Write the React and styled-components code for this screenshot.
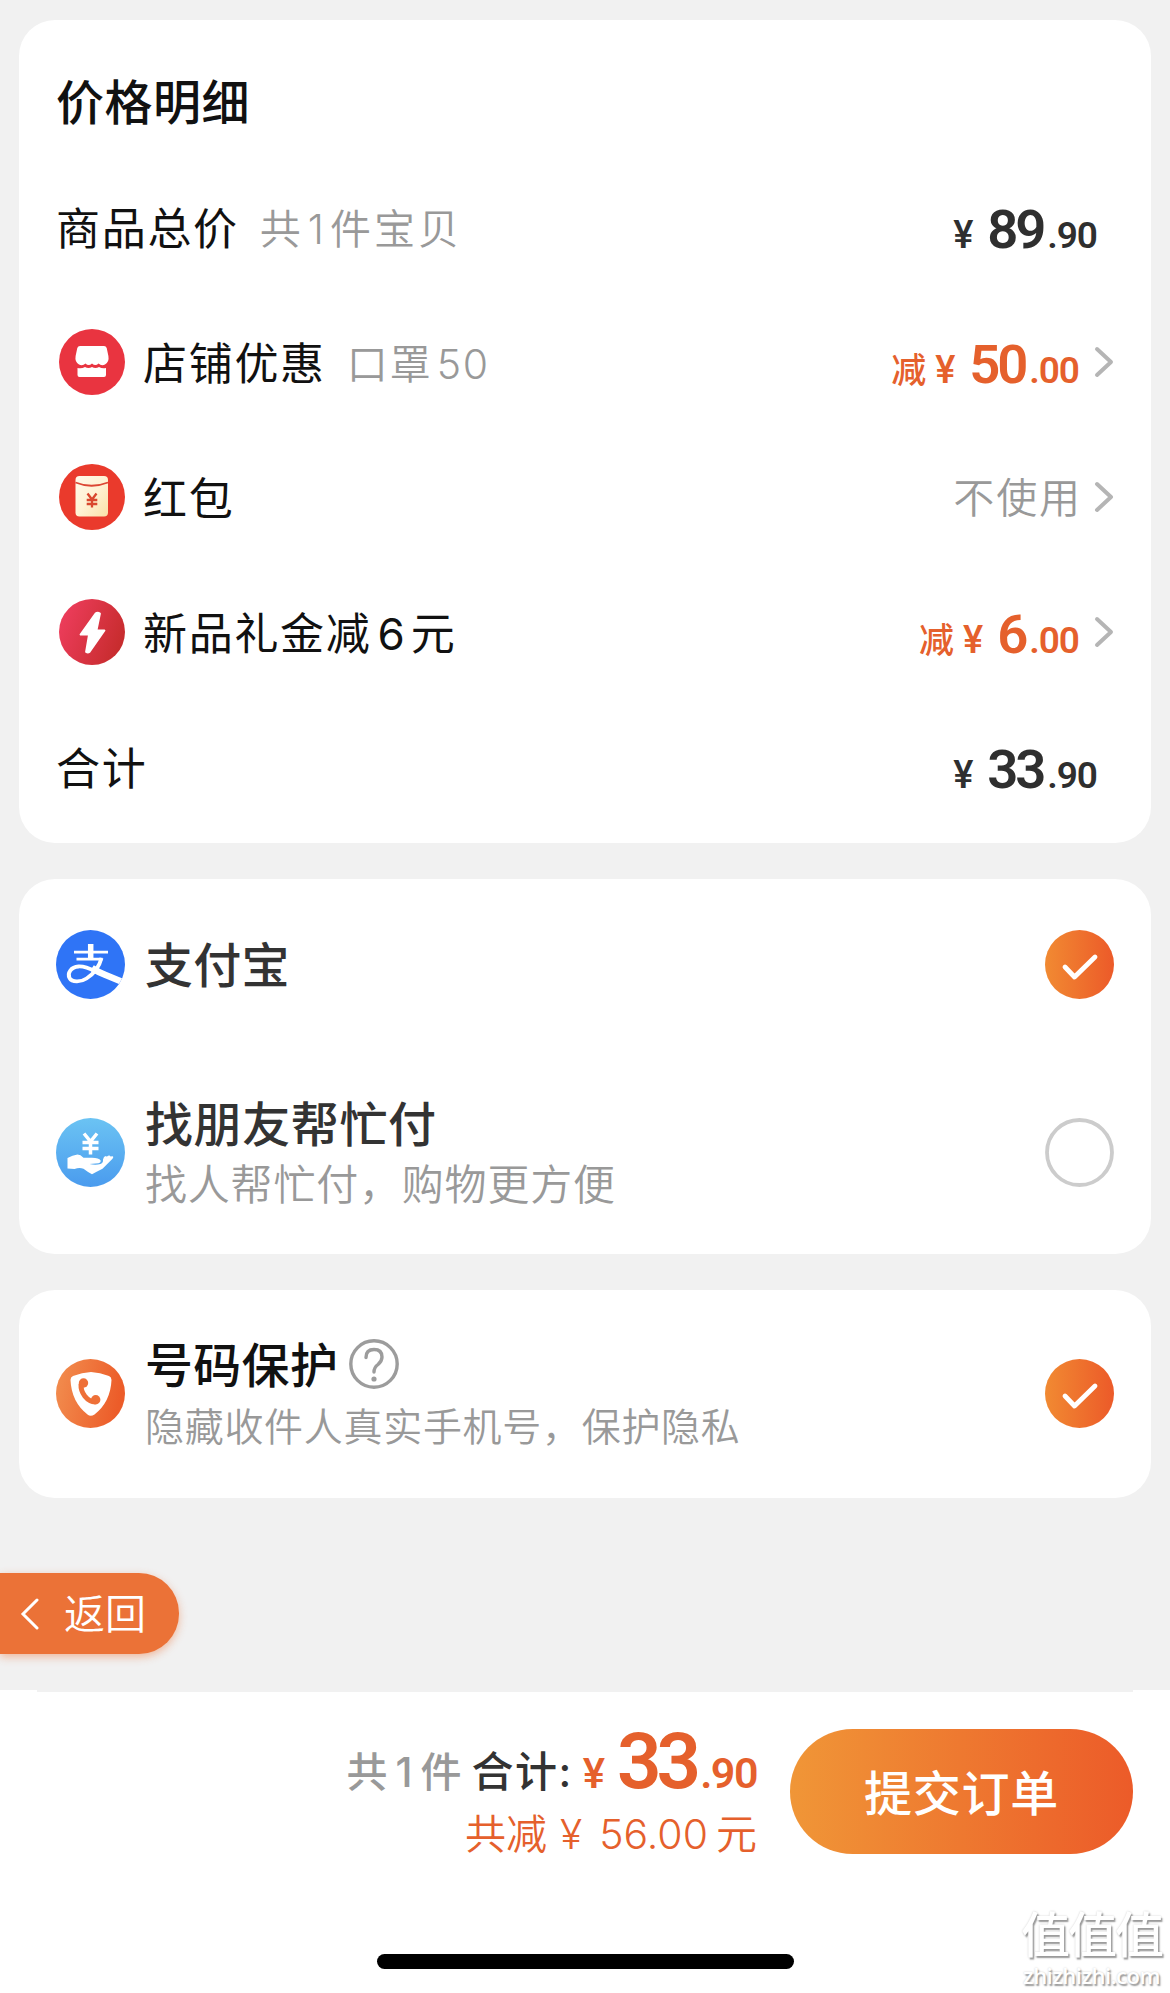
import * as React from 'react';
import styled, { createGlobalStyle } from 'styled-components';

const GlobalStyle = createGlobalStyle`
  * { box-sizing: border-box; }
  body {
    margin: 0;
    background: #f1f1f1;
    font-family: Inter, "Noto Sans CJK SC", sans-serif;
    color: #111;
  }
`;

const Page = styled.div`
  width: 1170px;
  height: 1993px;
  display: flex;
  flex-direction: column;
  overflow: hidden;
`;

const Card = styled.section`
  flex: none;
  height: ${({ height }) => height}px;
  margin: ${({ gap }) => gap}px 19px 0;
  border-radius: 36px;
  background: #fff;
`;

const Title = styled.h2`
  margin: 0;
  height: 139px;
  padding: 19px 0 0 37px;
  display: flex;
  align-items: center;
  font-size: 48px;
  font-weight: 500;
  letter-spacing: 0.5px;
`;

const Row = styled.div`
  height: 135px;
  padding: 0 37px 0 ${({ icon }) => (icon ? 40 : 37)}px;
  display: flex;
  align-items: center;
`;

const Text = styled.span`
  font-family: Inter, "Noto Sans CJK SC", sans-serif;
  font-size: ${({ size }) => size}px;
  font-weight: ${({ weight }) => weight || 400};
  letter-spacing: ${({ spacing }) => spacing || 0}px;
  margin-left: ${({ left }) => left || 0}px;
  margin-bottom: ${({ bottom }) => bottom || 0}px;
  padding-top: ${({ drop }) => (drop === undefined ? 4 : drop)}px;
  color: ${({ color }) => color || '#111'};
  line-height: 56px;
  white-space: nowrap;
`;

const Digits = styled.span`
  margin: 0 ${({ right }) => right || 0}px 0 ${({ left }) => left || 0}px;
  letter-spacing: ${({ spacing }) => spacing || 0}px;
`;

const Price = styled.span`
  display: flex;
  align-items: baseline;
  margin-left: ${({ left }) => (left ? `${left}px` : 'auto')};
  margin-right: ${({ right }) => right || 0}px;
  padding-top: ${({ drop }) => (drop === undefined ? 11 : drop)}px;
  font-family: Roboto, "Noto Sans CJK SC", sans-serif;
  font-weight: 600;
  color: ${({ color }) => color || '#2f2f2f'};
  line-height: 56px;
  white-space: nowrap;
`;

const Prefix = styled.span`
  font-family: "Noto Sans CJK SC", sans-serif;
  font-weight: 500;
  font-size: 35px;
  margin-right: 9px;
`;

const Yen = styled.span`
  font-size: ${({ size }) => size || 38}px;
  font-weight: 500;
  margin-right: ${({ right }) => (right === undefined ? 14 : right)}px;
`;

const Whole = styled.span`
  font-size: ${({ size }) => size || 54.5}px;
  letter-spacing: ${({ spacing }) => spacing || -3.2}px;
`;

const Cents = styled.span`
  font-size: ${({ size }) => size || 37}px;
  letter-spacing: ${({ spacing }) => spacing || -1}px;
  margin-left: 4px;
`;

const Arrow = styled.svg`
  flex: none;
  width: 20px;
  height: 32px;
  margin-left: 15px;
  fill: none;
  stroke: #b5b5b5;
  stroke-width: 4;
  stroke-linecap: round;
  stroke-linejoin: round;
`;

const Icon = styled.svg`
  flex: none;
  width: ${({ size }) => size}px;
  height: ${({ size }) => size}px;
`;

const PayRow = styled.div`
  height: ${({ height }) => height}px;
  padding: 0 37px;
  display: flex;
  align-items: center;
`;

const PayText = styled.div`
  flex: 1;
  display: flex;
  flex-direction: column;
  padding: 0 0 0 20px;
`;

const NameLine = styled.div`
  display: flex;
  align-items: center;
  gap: 11px;
  height: 60px;
`;

const BackButton = styled.button`
  flex: none;
  width: 179px;
  height: 81px;
  margin: 75px 0 36px;
  padding: 0 0 0 20px;
  border: 0;
  border-radius: 0 40px 40px 0;
  background: #eb7237;
  box-shadow: 0 3px 8px rgba(235, 114, 55, 0.45);
  display: flex;
  align-items: center;
`;

const Footer = styled.footer`
  position: relative;
  flex: 1;
  padding: 39px 37px 0 0;
  background: #fff;
  display: flex;
  align-items: flex-start;
  justify-content: flex-end;

  &::before {
    content: "";
    position: absolute;
    top: 0;
    left: 37px;
    right: 37px;
    height: 2px;
    background: #f1f1f1;
  }
`;

const Totals = styled.div`
  display: flex;
  flex-direction: column;
  align-items: flex-end;
  margin-right: 33px;
`;

const TotalLine = styled.div`
  display: flex;
  align-items: flex-end;
  height: 73px;
`;

const Submit = styled.button`
  display: flex;
  align-items: center;
  justify-content: center;
  width: 343px;
  height: 125px;
  padding: 0;
  border: 0;
  border-radius: 63px;
  background: linear-gradient(90deg, #f09637, #ec5b29);
`;

const HomeBar = styled.div`
  position: absolute;
  left: 377px;
  bottom: 24px;
  width: 417px;
  height: 15px;
  border-radius: 8px;
  background: #000;
`;

const Watermark = styled.div`
  position: absolute;
  right: 7px;
  bottom: 6px;
  width: 143px;
  display: flex;
  flex-direction: column;
  align-items: center;
  gap: 3px;
  color: #fff;
  text-shadow: 1.5px 1.5px 1.5px #999, 0 0 2px #ccc;
  white-space: nowrap;
`;

const MarkName = styled.span`
  font-size: 49px;
  font-weight: 500;
  line-height: 48px;
  letter-spacing: -2px;
`;

const MarkSite = styled.span`
  font-family: "Open Sans", sans-serif;
  font-size: 22px;
  font-weight: 600;
  line-height: 24px;
  letter-spacing: -0.5px;
`;

const Chevron = () => (
  <Arrow viewBox="0 0 20 32">
    <path d="M3 3 L17 16 L3 29" />
  </Arrow>
);

const ShopIcon = () => (
  <Icon size={66} viewBox="0 0 66 66">
    <circle cx="33" cy="33" r="33" fill="#e93440" />
    <path d="M21 17h24q2 0 2.700 2l1.700 8q1 6-3.400 8.500-3.500 1.700-6.500-1-3 3-6.500 0-3.500 3-6.500 0-3 2.700-6.500 1-4.400-2.500-3.400-8.500l1.700-8q.7-2 2.700-2z" fill="#fff" />
    <path d="M18.500 39q4 1 7.500-1 3.500 2 7 0 3.500 2 7 0 3.500 2 7 1v7q0 2-2 2H20.500q-2 0-2-2z" fill="#fff" />
  </Icon>
);

const PacketIcon = () => (
  <Icon size={66} viewBox="0 0 66 66">
    <defs>
      <linearGradient id="packet" x1="0" y1="0" x2="1" y2="1">
        <stop offset="0" stopColor="#fff9ea" />
        <stop offset="0.500" stopColor="#fff2d4" />
        <stop offset="1" stopColor="#fae0a8" />
      </linearGradient>
    </defs>
    <circle cx="33" cy="33" r="33" fill="#ea3a2c" />
    <rect x="16.500" y="12" width="32.500" height="40.500" rx="4" fill="url(#packet)" />
    <path d="M16.500 18.500q16 6.500 32.500 0" fill="none" stroke="#dc4734" strokeWidth="1.800" />
    <path d="M28.500 29.500l4.500 6 4.500-6M33 35.500v8M27.700 36h10.600M27.700 40h10.600" fill="none" stroke="#d9482f" strokeWidth="2.300" />
  </Icon>
);

const BoltIcon = () => (
  <Icon size={66} viewBox="0 0 66 66">
    <defs>
      <linearGradient id="bolt" x1="0" y1="0.300" x2="1" y2="0.700">
        <stop offset="0" stopColor="#ed3d5c" />
        <stop offset="1" stopColor="#c52b2b" />
      </linearGradient>
    </defs>
    <circle cx="33" cy="33" r="33" fill="url(#bolt)" />
    <path d="M36.500 14.500L21.500 35.500h8.500L27 53q2 1 3.500 0L45.500 31.500H37.500L41 14.500q-2.500-1.500-4.500 0z" fill="#fff" stroke="#fff" strokeWidth="1.800" strokeLinejoin="round" />
  </Icon>
);

const AlipayIcon = () => (
  <Icon size={69} viewBox="0 0 69 69">
    <defs>
      <clipPath id="ali"><circle cx="34.500" cy="34.500" r="34.500" /></clipPath>
    </defs>
    <circle cx="34.500" cy="34.500" r="34.500" fill="#2f74f6" />
    <g clipPath="url(#ali)" fill="none" stroke="#fff">
      <path d="M18 22.200h34M20.500 29.200h26" strokeWidth="2.800" />
      <path d="M34.700 14v15" strokeWidth="5.500" />
      <path d="M45.500 28c-2 8-8 16-15 20.500-6 4-14.500 4-17-.5-2.500-5 1.500-11 9-11.500 7-.5 13 3 19 6" strokeWidth="3.800" />
      <path d="M36 38q6 4 13 6.800l20 8.200" strokeWidth="6.500" />
    </g>
  </Icon>
);

const FriendIcon = () => (
  <Icon size={69} viewBox="0 0 69 69">
    <defs>
      <linearGradient id="friend" x1="0" y1="0" x2="0" y2="1">
        <stop offset="0" stopColor="#6bc3f3" />
        <stop offset="1" stopColor="#4a9bee" />
      </linearGradient>
    </defs>
    <circle cx="34.500" cy="34.500" r="34.500" fill="url(#friend)" />
    <path d="M28 15.500l6.500 8 6.500-8M34.500 23v13.500M26.500 24.500h16M26.500 30.500h16" fill="none" stroke="#fff" strokeWidth="3.500" />
    <path d="M11.500 40q5-2.800 10-3.500 3 0 6 3.200h8.500q7 0 8.500 2.500.8 2-2 3l-9 .8q6 1.500 11 0 3-1.500 2.500-4.500l1-2.500q3-2 2.500 0 3-2.500 4-.5l2-.2q1.500.5 0 2.500l-10 10q-6 3-10.500 5.500-4-2-8.500-5.500-4-1.500-9 .2l-7-.5z" fill="#fff" />
  </Icon>
);

const ShieldIcon = () => (
  <Icon size={69} viewBox="0 0 69 69">
    <defs>
      <linearGradient id="shield" x1="0" y1="0" x2="1" y2="0.200">
        <stop offset="0" stopColor="#f28f50" />
        <stop offset="1" stopColor="#ec5c29" />
      </linearGradient>
    </defs>
    <circle cx="34.500" cy="34.500" r="34.500" fill="url(#shield)" />
    <path d="M35 13q9 .5 18 4 2.500 1 2.500 4-1 22-17 34.500-4 2.500-7 0Q15.500 43 14.500 21q0-3 2.500-4 9-3.500 18-4z" fill="#fff" />
    <path d="M25 25C24.500 34 31 42.500 39.500 43" fill="none" stroke="#ee7038" strokeWidth="5" />
    <circle cx="27.500" cy="24" r="4.700" fill="#ee7038" />
    <circle cx="39.700" cy="40.800" r="4.700" fill="#ee7038" />
  </Icon>
);

const CheckIcon = () => (
  <Icon size={69} viewBox="0 0 69 69">
    <defs>
      <linearGradient id="check" x1="0" y1="0" x2="1" y2="0">
        <stop offset="0" stopColor="#f18a32" />
        <stop offset="1" stopColor="#ec5a29" />
      </linearGradient>
    </defs>
    <circle cx="34.500" cy="34.500" r="34.500" fill="url(#check)" />
    <path d="M20 37l9.500 10L50 27" fill="none" stroke="#fff" strokeWidth="4.800" strokeLinecap="round" strokeLinejoin="round" />
  </Icon>
);

const UncheckedIcon = () => (
  <Icon size={69} viewBox="0 0 69 69">
    <circle cx="34.500" cy="34.500" r="32.500" fill="none" stroke="#ccc" strokeWidth="3.800" />
  </Icon>
);

const HelpIcon = () => (
  <Icon size={50} viewBox="0 0 50 50">
    <g fill="none" stroke="#9c9c9c" strokeWidth="3.400" strokeLinecap="round">
      <circle cx="25" cy="25" r="23.200" />
      <path d="M17 18.500q0-8 8-8t8 7.500q0 4-4 7.500-4 3-4 7.500" />
    </g>
    <circle cx="25" cy="40" r="2.600" fill="#9c9c9c" />
  </Icon>
);

const Amount = ({ whole, cents, prefix, color, right }) => (
  <Price color={color} right={right}>
    {prefix && <Prefix>{prefix}</Prefix>}
    <Yen>¥</Yen>
    <Whole>{whole}</Whole>
    <Cents>.{cents}</Cents>
  </Price>
);

const App = () => (
  <Page>
    <GlobalStyle />
    <Card height={823} gap={20}>
      <Title>价格明细</Title>
      <Row>
        <Text size={44} spacing={1.7}>商品总价</Text>
        <Text size={41} spacing={3} left={21} weight={350} color="#999">
          共<Digits left={4} right={6}>1</Digits>件宝贝
        </Text>
        <Amount whole="89" cents="90" right={17} />
      </Row>
      <Row icon>
        <ShopIcon />
        <Text size={44} spacing={1.7} left={18}>店铺优惠</Text>
        <Text size={41} spacing={2} left={21} weight={350} color="#999">
          口罩<Digits left={4} spacing={1.5}>50</Digits>
        </Text>
        <Amount prefix="减" whole="50" cents="00" color="#e5602c" />
        <Chevron />
      </Row>
      <Row icon>
        <PacketIcon />
        <Text size={44} spacing={1.7} left={18}>红包</Text>
        <Price drop={0} right={-3}><Text size={41} spacing={1.9} color="#999" weight={350} drop={2}>不使用</Text></Price>
        <Chevron />
      </Row>
      <Row icon>
        <BoltIcon />
        <Text size={44} spacing={1.7} left={18}>
          新品礼金减<Digits left={6} right={6}>6</Digits>元
        </Text>
        <Amount prefix="减" whole="6" cents="00" color="#e5602c" />
        <Chevron />
      </Row>
      <Row>
        <Text size={44} spacing={1.7}>合计</Text>
        <Amount whole="33" cents="90" right={17} />
      </Row>
    </Card>

    <Card height={375} gap={36}>
      <PayRow height={171}>
        <AlipayIcon />
        <PayText><Text size={48} spacing={0.3} weight={500} color="#333" drop={2}>支付宝</Text></PayText>
        <CheckIcon />
      </PayRow>
      <PayRow height={205}>
        <FriendIcon />
        <PayText>
          <NameLine><Text size={48} spacing={0.6} weight={500} color="#333">找朋友帮忙付</Text></NameLine>
          <NameLine><Text size={42} spacing={0.8} weight={350} color="#999">找人帮忙付，购物更方便</Text></NameLine>
        </PayText>
        <UncheckedIcon />
      </PayRow>
    </Card>

    <Card height={208} gap={36}>
      <PayRow height={207}>
        <ShieldIcon />
        <PayText>
          <NameLine>
            <Text size={48} spacing={0.3} weight={500}>号码保护</Text>
            <HelpIcon />
          </NameLine>
          <NameLine><Text size={39} spacing={0.7} weight={350} color="#999" drop={6}>隐藏收件人真实手机号，保护隐私</Text></NameLine>
        </PayText>
        <CheckIcon />
      </PayRow>
    </Card>

    <BackButton>
      <svg width="20" height="32" viewBox="0 0 20 32" fill="none" stroke="#fff" strokeWidth="3" strokeLinecap="round">
        <path d="M17 2 L3 16 L17 30" />
      </svg>
      <Text size={41} left={24} weight={350} color="#fff" drop={0}>返回</Text>
    </BackButton>

    <Footer>
      <Totals>
        <TotalLine>
          <Text size={41} weight={500} color="#999" bottom={2}>
            共<Digits left={8} right={8}>1</Digits>件
          </Text>
          <Text size={42} spacing={1.5} left={10} weight={500} color="#333" bottom={2}>合计:</Text>
          <Price color="#e5602c" drop={0} left={10}>
            <Yen size={42} right={12}>¥</Yen>
            <Whole size={78} spacing={-5}>33</Whole>
            <Cents size={43} spacing={-1.5}>.90</Cents>
          </Price>
        </TotalLine>
        <Text size={41} weight={350} color="#e5602c">
          共减<Digits left={13} right={17}>¥</Digits>56.00<Digits left={8} />元
        </Text>
      </Totals>
      <Submit><Text size={48} spacing={0.8} weight={500} color="#fff">提交订单</Text></Submit>
      <HomeBar />
      <Watermark>
        <MarkName>值值值</MarkName>
        <MarkSite>zhizhizhi.com</MarkSite>
      </Watermark>
    </Footer>
  </Page>
);

export default App;
